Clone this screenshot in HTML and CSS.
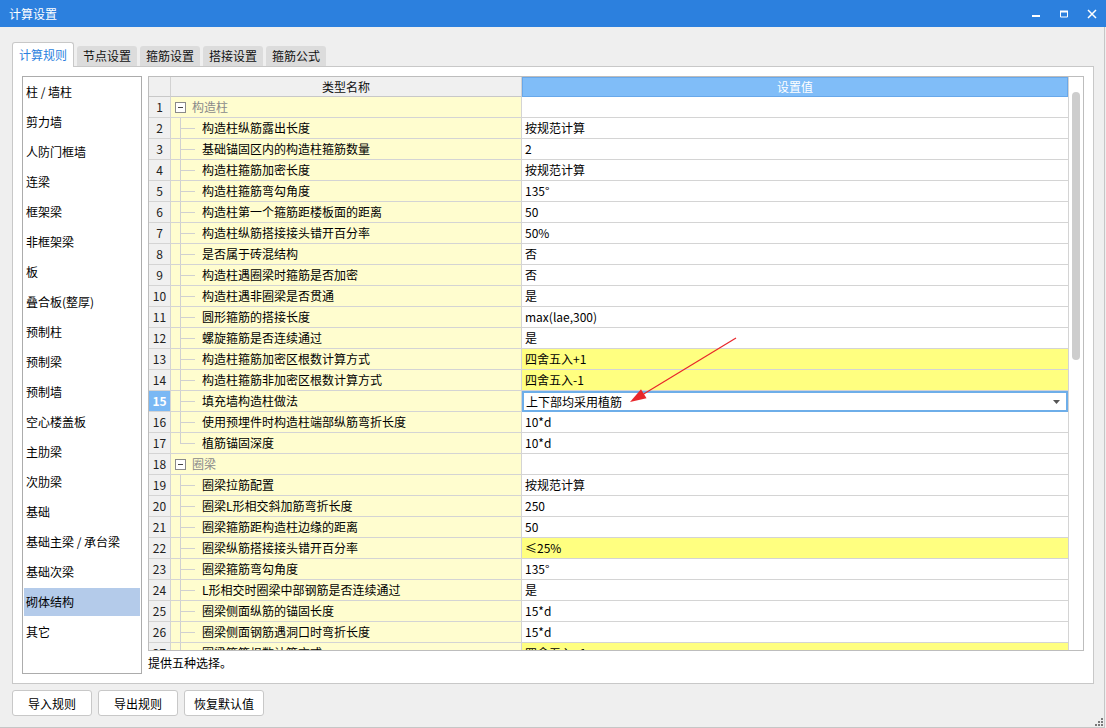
FILE: index.html
```html
<!DOCTYPE html>
<html lang="zh-CN">
<head>
<meta charset="utf-8">
<title>计算设置</title>
<link rel="stylesheet" href="styles.css">
</head>
<body>
<div class="titlebar">
  <div class="title">计算设置</div>
  <div class="controls">
    <div class="ctrl"><svg width="28" height="27" viewBox="0 0 28 27"><rect x="10" y="15" width="8" height="2" fill="#fff"/></svg></div>
    <div class="ctrl"><svg width="28" height="27" viewBox="0 0 28 27"><path d="M10.5 11.5h7v5.5h-7z" fill="none" stroke="#fff" stroke-width="1"/><rect x="10" y="10.5" width="8" height="2" fill="#fff"/></svg></div>
    <div class="ctrl"><svg width="28" height="27" viewBox="0 0 28 27"><path d="M10 10l8 8M18 10l-8 8" stroke="#fff" stroke-width="1.5"/></svg></div>
  </div>
</div>
<div class="window">
  <div class="main">
    <div class="tabs">
      <div class="tab active">计算规则</div>
      <div class="tab">节点设置</div>
      <div class="tab">箍筋设置</div>
      <div class="tab">搭接设置</div>
      <div class="tab">箍筋公式</div>
    </div>
    <div class="panel">
      <div class="list">
        <div class="item">柱 / 墙柱</div>
        <div class="item">剪力墙</div>
        <div class="item">人防门框墙</div>
        <div class="item">连梁</div>
        <div class="item">框架梁</div>
        <div class="item">非框架梁</div>
        <div class="item">板</div>
        <div class="item">叠合板(整厚)</div>
        <div class="item">预制柱</div>
        <div class="item">预制梁</div>
        <div class="item">预制墙</div>
        <div class="item">空心楼盖板</div>
        <div class="item">主肋梁</div>
        <div class="item">次肋梁</div>
        <div class="item">基础</div>
        <div class="item">基础主梁 / 承台梁</div>
        <div class="item">基础次梁</div>
        <div class="item selected">砌体结构</div>
        <div class="item">其它</div>
      </div>
      <div class="right">
        <div class="table">
          <div class="rows">
            <div class="hdr">
              <div class="hn"></div>
              <div class="hk">类型名称</div>
              <div class="hv">设置值</div>
            </div>
            <div class="r"><div class="n">1</div><div class="k cat"><span class="box"><svg width="11" height="11" viewBox="0 0 11 11"><rect x="0.5" y="0.5" width="10" height="10" fill="#fff" stroke="#8a8a8a"/><rect x="3" y="5" width="5" height="1" fill="#444"/></svg></span>构造柱</div><div class="v"></div></div>
            <div class="r"><div class="n">2</div><div class="k"><span class="g"></span>构造柱纵筋露出长度</div><div class="v">按规范计算</div></div>
            <div class="r"><div class="n">3</div><div class="k"><span class="g"></span>基础锚固区内的构造柱箍筋数量</div><div class="v">2</div></div>
            <div class="r"><div class="n">4</div><div class="k"><span class="g"></span>构造柱箍筋加密长度</div><div class="v">按规范计算</div></div>
            <div class="r"><div class="n">5</div><div class="k"><span class="g"></span>构造柱箍筋弯勾角度</div><div class="v">135°</div></div>
            <div class="r"><div class="n">6</div><div class="k"><span class="g"></span>构造柱第一个箍筋距楼板面的距离</div><div class="v">50</div></div>
            <div class="r"><div class="n">7</div><div class="k"><span class="g"></span>构造柱纵筋搭接接头错开百分率</div><div class="v">50%</div></div>
            <div class="r"><div class="n">8</div><div class="k"><span class="g"></span>是否属于砖混结构</div><div class="v">否</div></div>
            <div class="r"><div class="n">9</div><div class="k"><span class="g"></span>构造柱遇圈梁时箍筋是否加密</div><div class="v">否</div></div>
            <div class="r"><div class="n">10</div><div class="k"><span class="g"></span>构造柱遇非圈梁是否贯通</div><div class="v">是</div></div>
            <div class="r"><div class="n">11</div><div class="k"><span class="g"></span>圆形箍筋的搭接长度</div><div class="v">max(lae,300)</div></div>
            <div class="r"><div class="n">12</div><div class="k"><span class="g"></span>螺旋箍筋是否连续通过</div><div class="v">是</div></div>
            <div class="r"><div class="n">13</div><div class="k"><span class="g"></span>构造柱箍筋加密区根数计算方式</div><div class="v y">四舍五入+1</div></div>
            <div class="r"><div class="n">14</div><div class="k"><span class="g"></span>构造柱箍筋非加密区根数计算方式</div><div class="v y">四舍五入-1</div></div>
            <div class="r"><div class="n cur">15</div><div class="k"><span class="g"></span>填充墙构造柱做法</div><div class="v sel"><span>上下部均采用植筋</span><svg width="7" height="4" viewBox="0 0 7 4"><path d="M0 0h7L3.5 4z" fill="#555"/></svg></div></div>
            <div class="r"><div class="n">16</div><div class="k"><span class="g"></span>使用预埋件时构造柱端部纵筋弯折长度</div><div class="v">10*d</div></div>
            <div class="r"><div class="n">17</div><div class="k"><span class="g last"></span>植筋锚固深度</div><div class="v">10*d</div></div>
            <div class="r"><div class="n">18</div><div class="k cat"><span class="box"><svg width="11" height="11" viewBox="0 0 11 11"><rect x="0.5" y="0.5" width="10" height="10" fill="#fff" stroke="#8a8a8a"/><rect x="3" y="5" width="5" height="1" fill="#444"/></svg></span>圈梁</div><div class="v"></div></div>
            <div class="r"><div class="n">19</div><div class="k"><span class="g"></span>圈梁拉筋配置</div><div class="v">按规范计算</div></div>
            <div class="r"><div class="n">20</div><div class="k"><span class="g"></span>圈梁L形相交斜加筋弯折长度</div><div class="v">250</div></div>
            <div class="r"><div class="n">21</div><div class="k"><span class="g"></span>圈梁箍筋距构造柱边缘的距离</div><div class="v">50</div></div>
            <div class="r"><div class="n">22</div><div class="k"><span class="g"></span>圈梁纵筋搭接接头错开百分率</div><div class="v y">≤25%</div></div>
            <div class="r"><div class="n">23</div><div class="k"><span class="g"></span>圈梁箍筋弯勾角度</div><div class="v">135°</div></div>
            <div class="r"><div class="n">24</div><div class="k"><span class="g"></span>L形相交时圈梁中部钢筋是否连续通过</div><div class="v">是</div></div>
            <div class="r"><div class="n">25</div><div class="k"><span class="g"></span>圈梁侧面纵筋的锚固长度</div><div class="v">15*d</div></div>
            <div class="r"><div class="n">26</div><div class="k"><span class="g"></span>圈梁侧面钢筋遇洞口时弯折长度</div><div class="v">15*d</div></div>
            <div class="r"><div class="n">27</div><div class="k"><span class="g"></span>圈梁箍筋根数计算方式</div><div class="v y">四舍五入+1</div></div>
          </div>
          <div class="vscroll"><div class="thumb"></div></div>
        </div>
        <div class="desc">提供五种选择。</div>
      </div>
    </div>
    <div class="btns">
      <div class="btn">导入规则</div>
      <div class="btn">导出规则</div>
      <div class="btn">恢复默认值</div>
    </div>
  </div>
  <div class="grip"><svg width="9" height="9" viewBox="0 0 9 9" fill="#7a7a7a"><rect x="7" y="1" width="2" height="2"/><rect x="4" y="4" width="2" height="2"/><rect x="7" y="4" width="2" height="2"/><rect x="1" y="7" width="2" height="2"/><rect x="4" y="7" width="2" height="2"/><rect x="7" y="7" width="2" height="2"/></svg></div>
</div>
<svg class="annot" width="1106" height="728" viewBox="0 0 1106 728">
  <line x1="736" y1="338" x2="642" y2="395" stroke="#e8262b" stroke-width="1.2"/>
  <path d="M630 402 L646.5 398.2 L641 389.2 Z" fill="#e8262b"/>
</svg>
</body>
</html>
```
FILE: styles.css
```css
* { box-sizing: border-box; }
html, body { margin: 0; padding: 0; }
body {
  position: relative;
  width: 1106px;
  height: 728px;
  overflow: hidden;
  background: #efefef;
  font-family: "Noto Sans CJK SC", "Microsoft YaHei", "Liberation Sans", sans-serif;
  font-size: 12px;
  color: #000;
}
.titlebar {
  height: 27px;
  background: #2c80de;
  color: #fff;
  display: flex;
  align-items: center;
  padding-left: 9px;
  font-size: 12px;
}
.title { flex: 1; line-height: 27px; }
.controls { display: flex; height: 27px; }
.ctrl { width: 28px; height: 27px; }
.ctrl svg { display: block; }

.window {
  position: relative;
  width: 1105px;
  height: 701px;
  border-right: 1px solid #c6c6c6;
  border-bottom: 1px solid #c6c6c6;
  background: #efefef;
}
.main {
  display: flex;
  flex-direction: column;
  padding: 15px 10px 0 12px;
}
.tabs {
  display: flex;
  align-items: flex-end;
  gap: 3px;
  height: 24px;
}
.tab {
  width: 60px;
  height: 20px;
  background: #dcdcdc;
  border-radius: 3px 3px 0 0;
  display: flex;
  align-items: center;
  justify-content: center;
  color: #111;
  line-height: 20px;
}
.tab.active {
  width: 62px;
  height: 25px;
  margin-bottom: -1px;
  background: #fff;
  border: 1px solid #c8c8c8;
  border-bottom: none;
  color: #2b7fde;
  position: relative;
  z-index: 1;
  padding-bottom: 1px;
}
.panel {
  height: 618px;
  border: 1px solid #c8c8c8;
  background: #fff;
  display: flex;
  gap: 6px;
  padding: 9px;
}
.list {
  width: 120px;
  height: 598px;
  border: 1px solid #acacac;
  background: #fff;
}
.item {
  height: 28px;
  margin: 1px;
  padding-left: 2px;
  line-height: 28px;
  white-space: nowrap;
  color: #000;
}
.item + .item { margin-top: 2px; }
.item.selected { background: #b4cbea; }

.right {
  width: 936px;
  display: flex;
  flex-direction: column;
}
.table {
  height: 575px;
  border: 1px solid #bdbdbd;
  display: flex;
  overflow: hidden;
  background: #fff;
}
.rows { width: 919px; }
.hdr {
  display: grid;
  grid-template-columns: 22px 351px 546px;
  height: 20px;
}
.hn, .hk {
  background: #f0f0f0;
  border-right: 1px solid #d2d2d2;
  border-bottom: 1px solid #c8c8c8;
}
.hk { text-align: center; line-height: 19px; color: #111; }
.hv {
  background: #80bdf8;
  border: 1px solid #68a8ea;
  color: #fff;
  text-align: center;
  line-height: 18px;
}
.r {
  display: grid;
  grid-template-columns: 22px 351px 546px;
  height: 21px;
}
.n {
  background: #f0f0f0;
  border-right: 1px solid #d4d4d4;
  border-bottom: 1px solid #d4d4d4;
  text-align: center;
  line-height: 20px;
  color: #222;
}
.n.cur {
  background: #7ab8f4;
  color: #fff;
  font-weight: bold;
}
.k {
  background: #fffdcf;
  border-right: 1px solid #d4d4d4;
  border-bottom: 1px solid #d4d4d4;
  display: flex;
  align-items: center;
  white-space: nowrap;
  line-height: 20px;
  overflow: hidden;
}
.k.cat { color: #8a8a8a; }
.box { width: 21px; height: 20px; display: flex; align-items: center; padding-left: 4px; }
.box svg { display: block; }
.g {
  width: 31px;
  height: 20px;
  flex: none;
  background:
    linear-gradient(#d0d0d0, #d0d0d0) 9px 0 / 1px 100% no-repeat,
    linear-gradient(#d0d0d0, #d0d0d0) 9px 10px / 15px 1px no-repeat;
}
.g.last {
  background:
    linear-gradient(#d0d0d0, #d0d0d0) 9px 0 / 1px 11px no-repeat,
    linear-gradient(#d0d0d0, #d0d0d0) 9px 10px / 15px 1px no-repeat;
}
.v {
  background: #fff;
  border-bottom: 1px solid #d4d4d4;
  padding-left: 3px;
  line-height: 20px;
  white-space: nowrap;
}
.v.y { background: #ffff80; }
.v.sel {
  display: flex;
  align-items: center;
  justify-content: space-between;
  padding-right: 6px;
  border: 2px solid #6eaee9;
  padding-left: 2px;
  line-height: 17px;
}
.v.sel svg { display: block; }

.vscroll {
  width: 15px;
  border-left: 1px solid #d4d4d4;
  padding: 15px 2px 0 3px;
  background: #fff;
}
.thumb {
  width: 8px;
  height: 268px;
  border-radius: 4px;
  background: #cdcdcd;
}
.desc {
  padding-top: 2px;
  line-height: 20px;
  color: #000;
}
.btns {
  display: flex;
  gap: 6px;
  margin-top: 6px;
}
.btn {
  width: 80px;
  height: 26px;
  border: 1px solid #c8c8c8;
  border-radius: 3px;
  background: #fff;
  display: flex;
  align-items: center;
  justify-content: center;
  color: #000;
}
.grip {
  position: absolute;
  right: 1px;
  bottom: 1px;
  width: 9px;
  height: 9px;
}
.grip svg { display: block; }
.annot {
  position: absolute;
  left: 0;
  top: 0;
  pointer-events: none;
}
```
